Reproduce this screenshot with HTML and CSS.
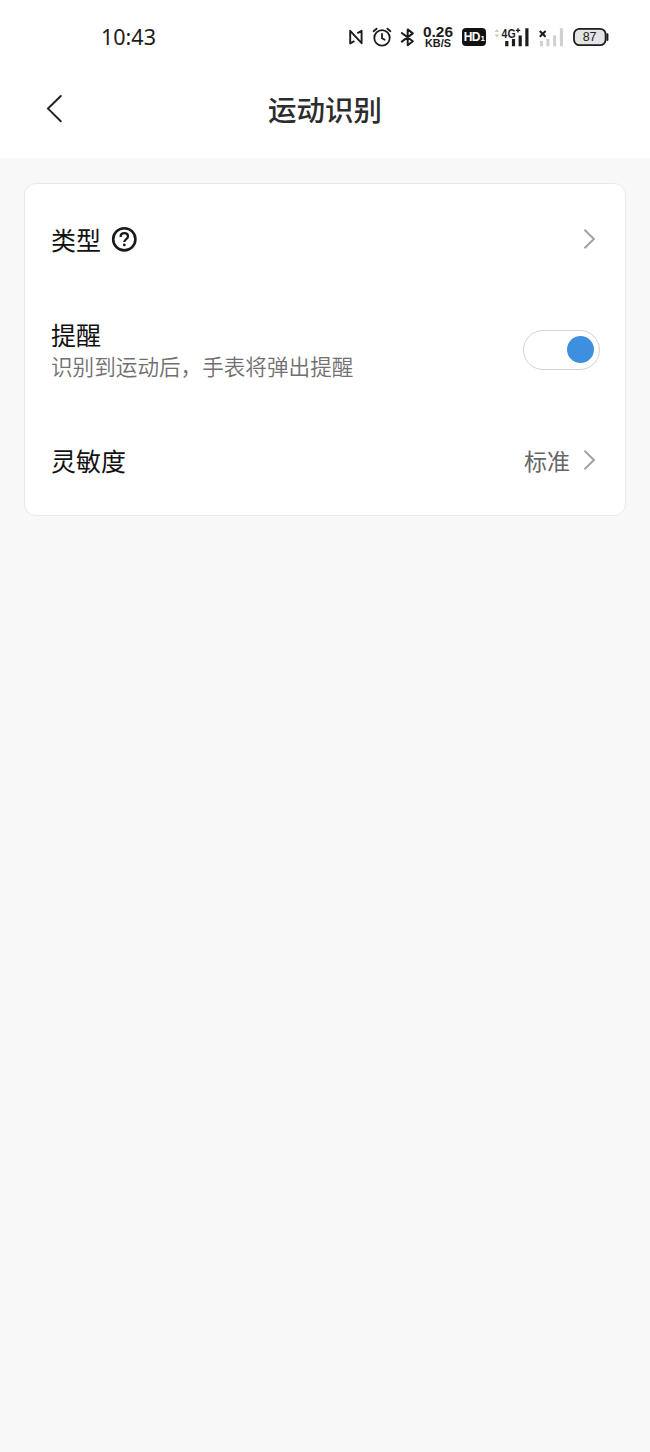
FILE: index.html
```html
<!DOCTYPE html>
<html lang="zh-CN">
<head>
<meta charset="utf-8">
<title>运动识别</title>
<link rel="stylesheet" href="styles.css">
</head>
<body>
<div class="statusbar">
  <span class="clock">10:43</span>
  <div class="indicators">
    <svg class="nfc" width="15" height="18" viewBox="0 0 15 18" fill="none" stroke="#1c1c1c" stroke-width="1.9" stroke-linejoin="round" stroke-linecap="round"><path d="M4.8 13.4L1.2 15.4V2.8L12.6 15.2V2.8L9 4.8"/></svg>
    <svg class="alarm" width="20" height="20" viewBox="0 0 20 20" fill="none" stroke="#1c1c1c" stroke-width="1.8" stroke-linecap="round"><circle cx="10" cy="10.9" r="7.7"/><path d="M10 6.9V11.2L12.6 12.8M1.6 4.2L4.6 1.7M18.4 4.2L15.4 1.7"/></svg>
    <svg class="bluetooth" width="15" height="20" viewBox="0 0 15 20" fill="none" stroke="#1c1c1c" stroke-width="2" stroke-linejoin="round" stroke-linecap="round"><path d="M1.8 6L12.8 14.2L7.7 18.2V2.4L12.8 6.4L1.8 14.6"/></svg>
    <svg class="speed" width="32" height="28" viewBox="0 -2 32 28"><text class="rate" x="0" y="11.8" textLength="30" lengthAdjust="spacingAndGlyphs">0.26</text><text class="unit" x="2" y="22" textLength="26" lengthAdjust="spacingAndGlyphs">KB/S</text></svg>
    <div class="hd">HD<small>1</small></div>
    <svg class="signal" width="35" height="22" viewBox="0 0 35 22"><path d="M.6 6L2.9 3.2L5.2 6ZM.6 8.6L2.9 11.4L5.2 8.6Z" fill="#c9c9c9"/><text x="7.6" y="11.6" class="net" textLength="14" lengthAdjust="spacingAndGlyphs">4G</text><path d="M21.8 4.4H26.2M24 2.2V6.6" stroke="#1c1c1c" stroke-width="1.4"/><path d="M12.8 15V20.2M19.5 13V20.2M26.2 9.4V20.2M32.9 2.2V20.2" stroke="#1c1c1c" stroke-width="3.2"/></svg>
    <svg class="nosim" width="26" height="22" viewBox="0 0 26 22"><path d="M3.4 15V20.2M9.9 13V20.2M16.6 9.4V20.2M23.4 2.2V20.2" stroke="#d0d0d0" stroke-width="3"/><path d="M1.8 5L7.6 10.8M7.6 5L1.8 10.8" stroke="#1c1c1c" stroke-width="2"/></svg>
    <svg class="battery" width="36" height="20" viewBox="0 0 36 20"><rect x="1" y="1.8" width="31.6" height="16.4" rx="5.5" fill="#e4e4e4" stroke="#1c1c1c" stroke-width="1.8"/><path d="M34.4 7.2V13" stroke="#1c1c1c" stroke-width="2" stroke-linecap="round"/><text x="16.6" y="14.4" text-anchor="middle" class="charge">87</text></svg>
  </div>
</div>
<header class="header">
  <svg class="back" width="20" height="30" viewBox="0 0 20 30" fill="none" stroke="#222" stroke-width="2" stroke-linecap="round"><path d="M16.8 2L4 14.6L16.8 27.2"/></svg>
  <h1>运动识别</h1>
</header>
<main class="content">
  <section class="card">
    <div class="row">
      <div class="label with-help"><span>类型</span>
        <svg width="26" height="26" viewBox="0 0 26 26" fill="none" stroke="#1a1a1a" stroke-width="2.6"><circle cx="13.3" cy="13.3" r="11.1"/><path d="M9.6 10.9C9.6 8.6 11.1 7.2 13.3 7.2S17 8.6 17 10.5C17 13.1 13.3 13.1 13.3 16.1" stroke-width="2.3"/><circle cx="13.3" cy="18.9" r="1.4" fill="#1a1a1a" stroke="none"/></svg>
      </div>
      <svg class="chevron" width="14" height="22" viewBox="0 0 14 22"><path d="M1.5 1.8L10.9 11L1.5 20.2"/></svg>
    </div>
    <div class="row">
      <div><div class="label">提醒</div><div class="hint">识别到运动后，手表将弹出提醒</div></div>
      <div class="toggle"><span class="knob"></span></div>
    </div>
    <div class="row">
      <div class="label">灵敏度</div>
      <div class="value"><span>标准</span><svg class="chevron" width="14" height="22" viewBox="0 0 14 22"><path d="M1.5 1.8L10.9 11L1.5 20.2"/></svg></div>
    </div>
  </section>
</main>
</body>
</html>
```
FILE: styles.css
```css
* { box-sizing: border-box; }
body {
  margin: 0;
  min-height: 1452px;
  background: #f8f8f8;
  color: #111;
  font-family: "Noto Sans CJK SC", sans-serif;
}
svg { display: block; flex: none; }
.statusbar {
  display: flex;
  justify-content: space-between;
  align-items: center;
  height: 74px;
  padding: 0 41px 0 101px;
  background: #fff;
}
.clock {
  font: 21.5px/26px "Noto Sans", sans-serif;
  color: #1c1c1c;
}
.indicators { display: flex; align-items: center; }
.alarm { margin-left: 8px; }
.bluetooth { margin-left: 8px; }
.speed { margin-left: 8px; fill: #1c1c1c; font-family: "Liberation Sans", sans-serif; font-weight: bold; }
.rate { font-size: 14px; }
.unit { font-size: 10px; }
.hd {
  width: 24px;
  height: 18px;
  margin-left: 7px;
  border-radius: 4px;
  background: #111;
  color: #fff;
  font: bold 12px/18px "Liberation Sans", sans-serif;
  text-align: center;
  letter-spacing: -.8px;
}
.hd small { margin-left: 1px; font-size: 8px; }
.signal { margin-left: 8px; }
.net { font: bold 12px "Liberation Sans", sans-serif; fill: #1c1c1c; }
.nosim { margin-left: 9px; }
.battery { margin-left: 9px; }
.charge { font: 12.5px "Liberation Sans", sans-serif; fill: #222; }
.header {
  display: grid;
  grid-template-columns: 60px 1fr 60px;
  align-items: center;
  height: 84px;
  padding: 0 44px 14px;
  background: #fff;
}
.header h1 {
  margin: 0;
  text-align: center;
  font-size: 28.5px;
  line-height: 40px;
  font-weight: 500;
  color: #2c2c2c;
}
.content { padding: 25px 24px; }
.card {
  height: 333px;
  padding: 0 26px;
  border: 1px solid #e9e9e9;
  border-radius: 12px;
  background: #fff;
}
.row {
  display: flex;
  justify-content: space-between;
  align-items: center;
  height: 110.5px;
}
.label { font-size: 25px; line-height: 32px; }
.with-help { display: flex; align-items: center; gap: 10px; }
.hint { font-size: 21.6px; line-height: 32px; font-weight: 350; color: #707070; }
.chevron { margin-right: 2px; fill: none; stroke: #a2a2a2; stroke-width: 2; }
.toggle {
  display: flex;
  align-items: center;
  justify-content: flex-end;
  width: 77px;
  height: 40px;
  padding-right: 5px;
  margin-right: -1px;
  border: 1.5px solid #d3d3d3;
  border-radius: 20px;
}
.knob { width: 27px; height: 27px; border-radius: 50%; background: #3e8fdf; }
.value {
  display: flex;
  align-items: center;
  gap: 13px;
  font-size: 23px;
  line-height: 32px;
  color: #666;
}
```
